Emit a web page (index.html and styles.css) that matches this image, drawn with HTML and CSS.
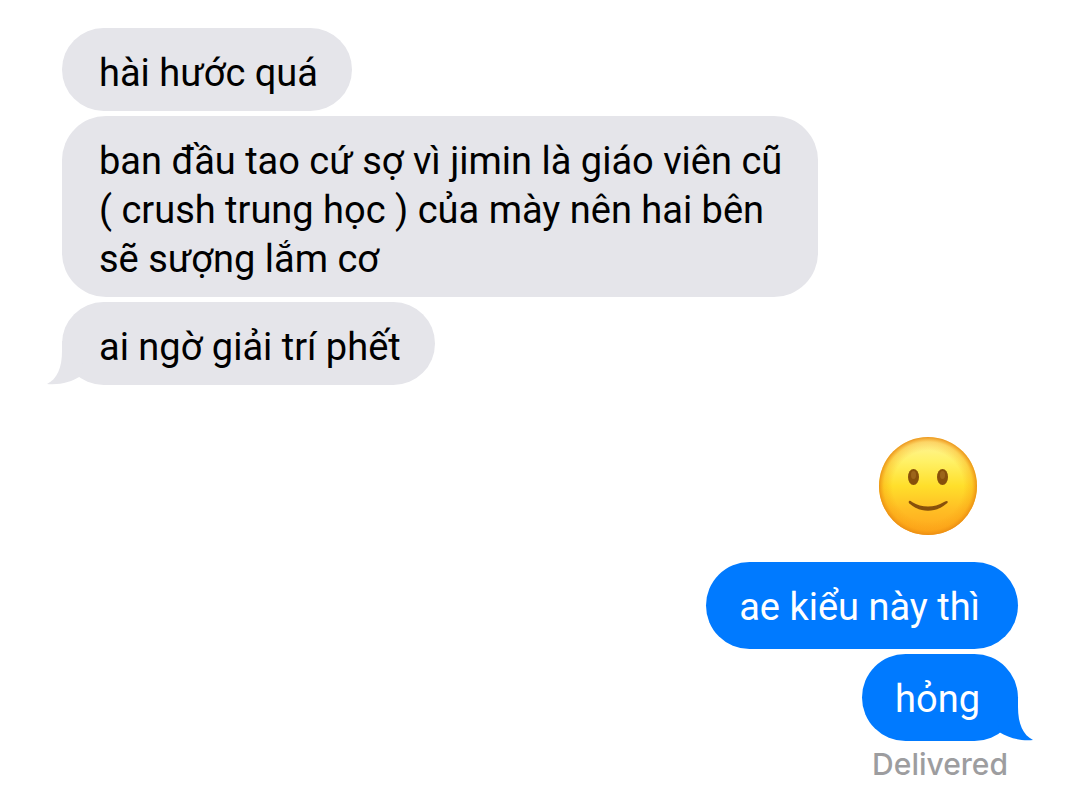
FILE: index.html
```html
<!DOCTYPE html>
<html lang="vi">
<head>
    <meta charset="UTF-8">
    <meta name="viewport" content="width=device-width, initial-scale=1.0">
    <title>Messages</title>
    <link rel="stylesheet" href="styles.css">
</head>
<body>
    <main class="chat">
        <div class="group received">
            <p class="bubble">hài hước quá</p>
            <p class="bubble">ban đầu tao cứ sợ vì jimin là giáo viên cũ (&nbsp;crush trung học&nbsp;) của mày nên hai bên sẽ sượng lắm cơ</p>
            <p class="bubble">
                ai ngờ giải trí phết
                <svg class="tail" viewBox="0 0 36 44" aria-hidden="true">
                    <path d="M15 0V10C15 27 10 38 0 43C14 44 24 41 34 35L36 20V0Z"/>
                </svg>
            </p>
        </div>

        <div class="group sent">
            <svg class="emoji" viewBox="0 0 98 98" role="img" aria-label="slightly smiling face">
                <defs>
                    <linearGradient id="face" x1="0" y1="0" x2="0" y2="1">
                        <stop offset="0" stop-color="#fff4a0"/>
                        <stop offset="0.25" stop-color="#fff166"/>
                        <stop offset="0.5" stop-color="#ffdf2b"/>
                        <stop offset="0.75" stop-color="#ffbd24"/>
                        <stop offset="1" stop-color="#ffa51c"/>
                    </linearGradient>
                    <radialGradient id="edge">
                        <stop offset="0.72" stop-color="#f79b10" stop-opacity="0"/>
                        <stop offset="0.9" stop-color="#f79b10" stop-opacity="0.35"/>
                        <stop offset="1" stop-color="#e98b12" stop-opacity="0.9"/>
                    </radialGradient>
                </defs>
                <circle cx="49" cy="49" r="49" fill="url(#face)"/>
                <circle cx="49" cy="49" r="49" fill="url(#edge)"/>
                <ellipse cx="34.5" cy="40" rx="5.5" ry="8" fill="#87500b"/>
                <ellipse cx="63.5" cy="40" rx="5.5" ry="8" fill="#87500b"/>
                <ellipse cx="34.5" cy="38" rx="2.5" ry="4" fill="#9c651a"/>
                <ellipse cx="63.5" cy="38" rx="2.5" ry="4" fill="#9c651a"/>
                <path d="M30 64Q29 66 31 67C41 76 57 76 67 67Q70 65 68 64Q67 64 65 65C55 71 43 71 33 65Q31 63 30 64Z" fill="#87500b"/>
            </svg>
            <p class="bubble">ae kiểu này thì</p>
            <p class="bubble">
                hỏng
                <svg class="tail" viewBox="0 0 36 44" aria-hidden="true">
                    <path d="M21 0V10C21 27 26 38 36 43C22 44 12 41 2 35L0 20V0Z"/>
                </svg>
            </p>
            <span class="status">Delivered</span>
        </div>
    </main>
</body>
</html>
```
FILE: styles.css
```css
body {
    margin: 0;
    background-color: #fff;
    color: #000;
    font-family: Roboto, "Liberation Sans", sans-serif;
    font-size: 38px;
    line-height: 49px;
}

.chat {
    display: flex;
    flex-direction: column;
    gap: 52px;
    padding: 28px 0 8px;
}

.group {
    display: flex;
    flex-direction: column;
    gap: 5px;
    padding: 0 62px;
}

.received {
    align-items: flex-start;
}

.sent {
    align-items: flex-end;
}

.bubble {
    position: relative;
    box-sizing: border-box;
    max-width: 756px;
    margin: 0;
    border-radius: 44px;
}

.received .bubble {
    padding: 21px 34px 13px 37px;
    background-color: #e5e5ea;
}

.sent .bubble {
    padding: 21px 38px 17px 33px;
    background-color: #007aff;
    color: #fff;
}

/* curl that hangs off the last bubble of a group */
.tail {
    position: absolute;
    bottom: 0;
    width: 36px;
    height: 44px;
}

.received .tail {
    left: -15px;
    fill: #e5e5ea;
}

.sent .tail {
    right: -15px;
    fill: #007aff;
}

.emoji {
    width: 98px;
    height: 98px;
    margin: 0 41px 22px 0;
}

.status {
    margin-right: 10px;
    color: #9d9d9f;
    font-family: Inter, "Liberation Sans", sans-serif;
    font-size: 30px;
    font-weight: 500;
    line-height: 36px;
}
```
